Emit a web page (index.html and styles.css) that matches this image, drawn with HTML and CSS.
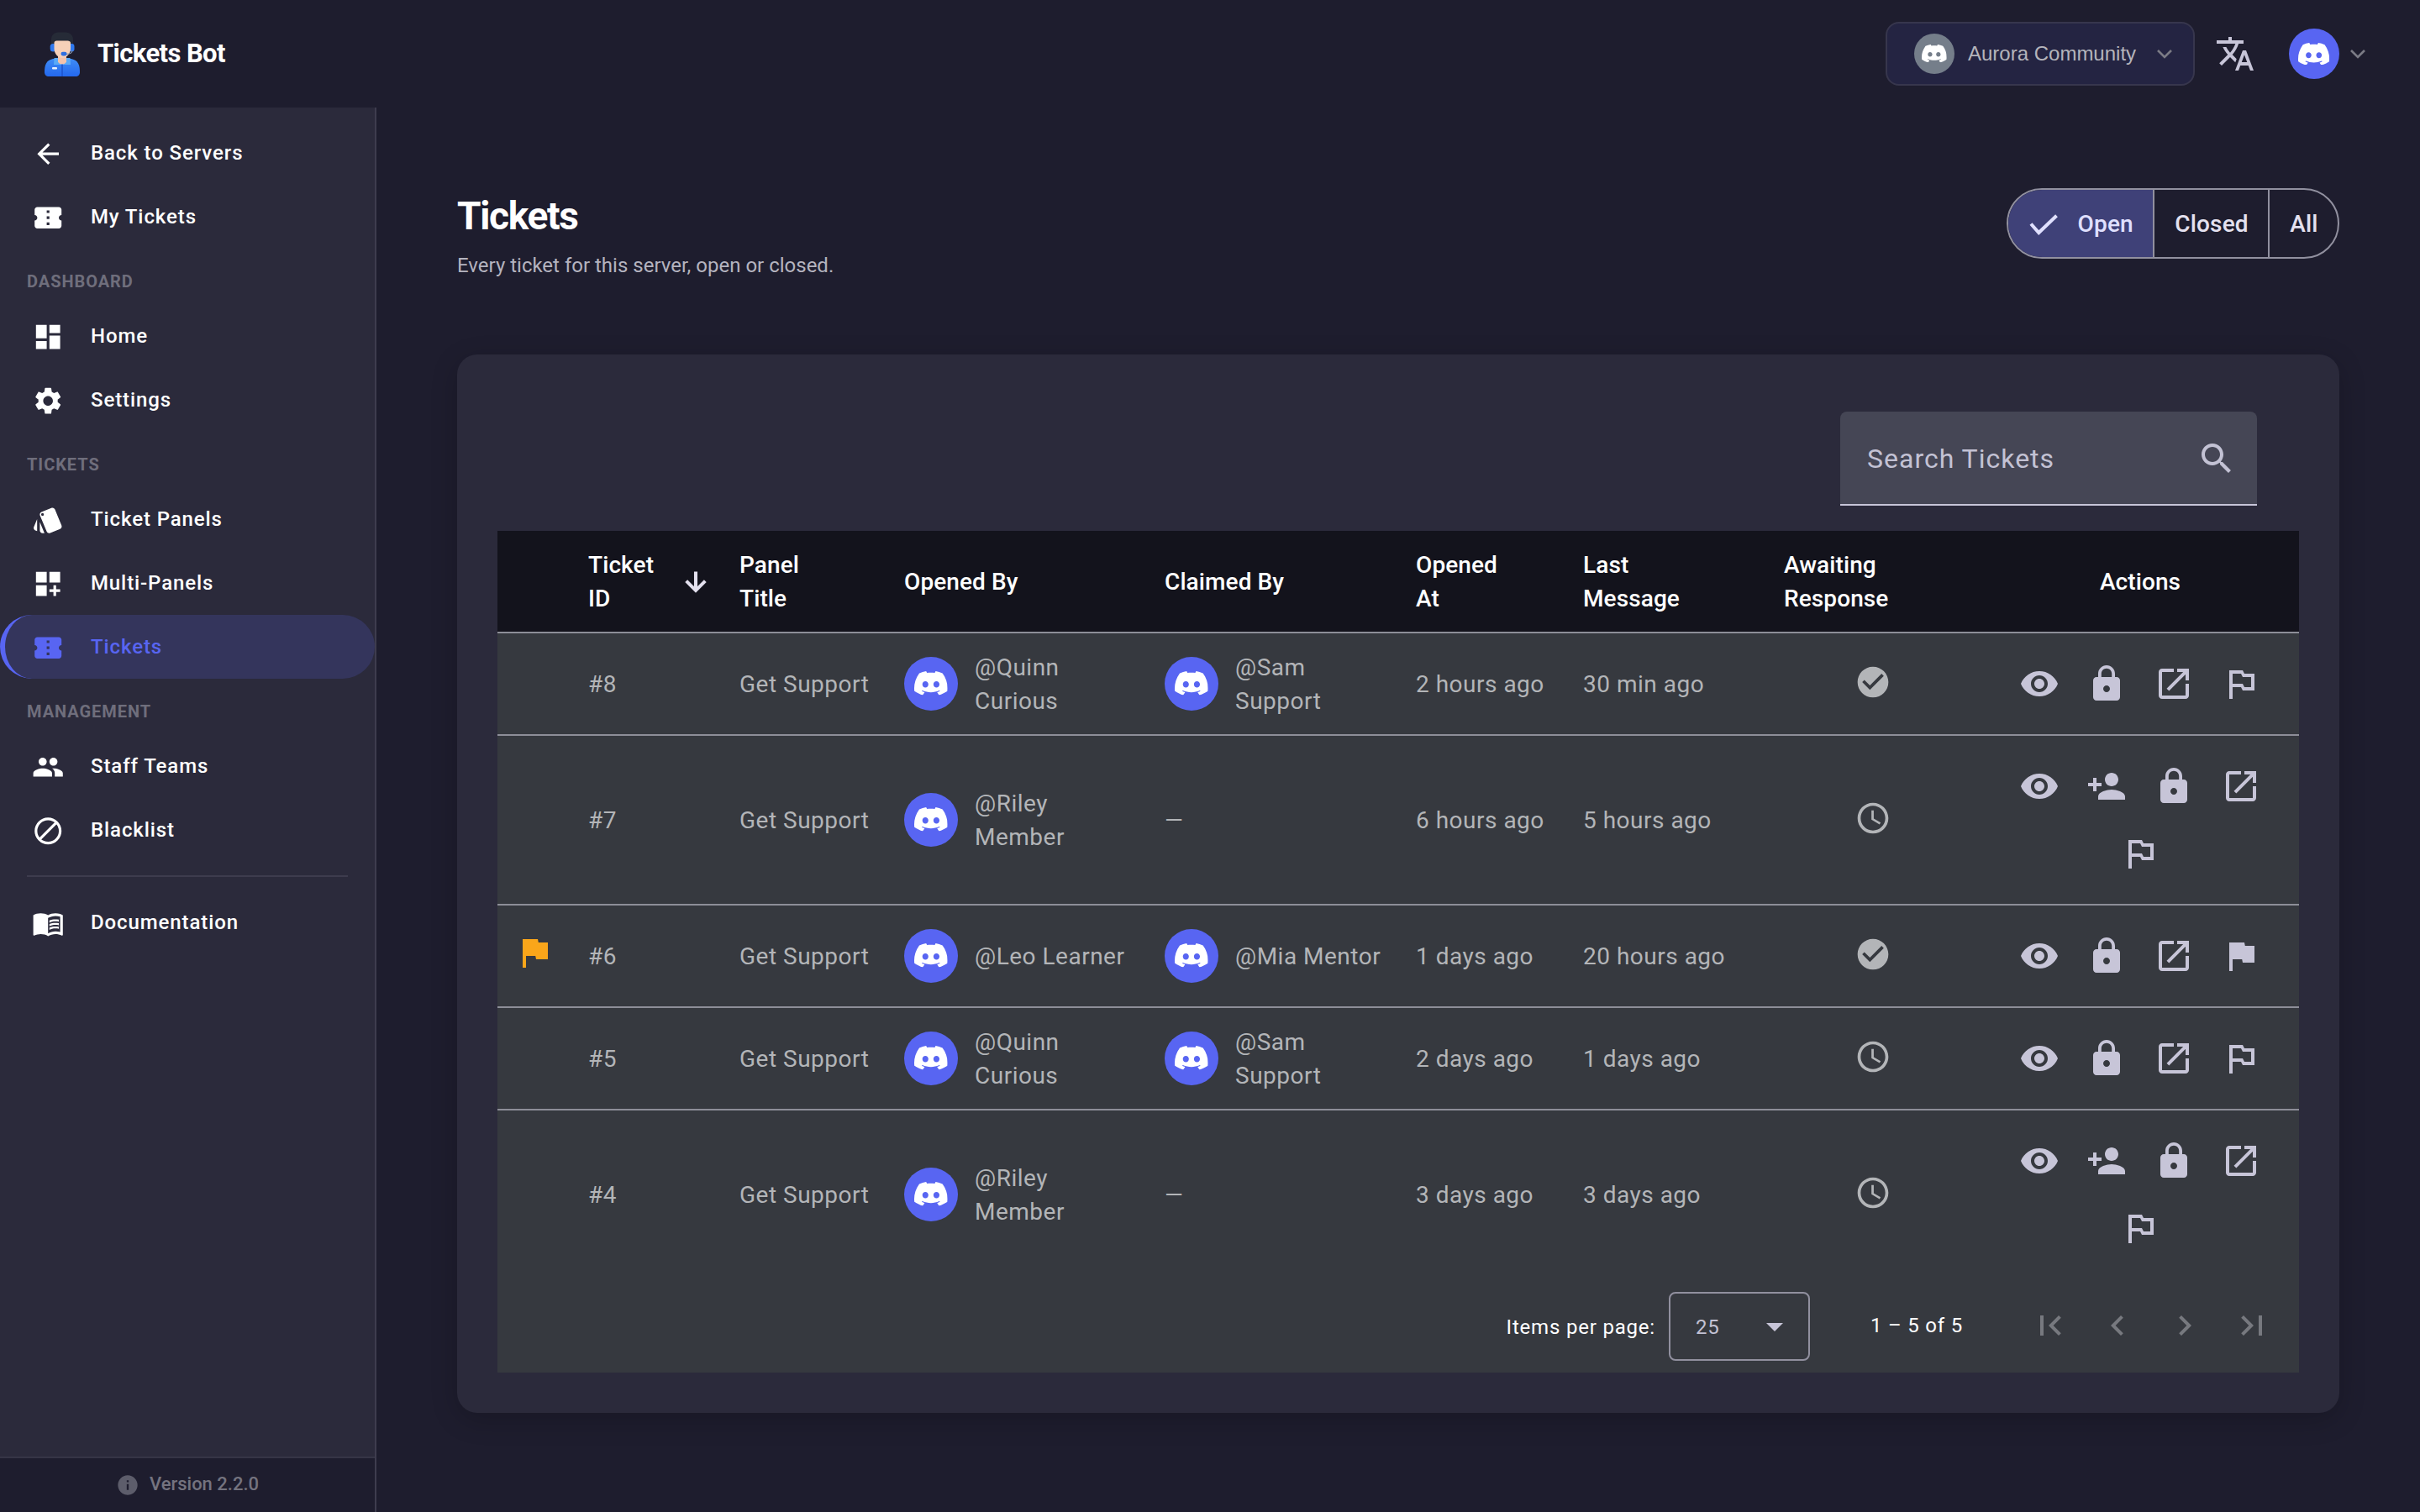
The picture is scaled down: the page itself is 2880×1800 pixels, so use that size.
FILE: index.html
```html
<!DOCTYPE html>
<html lang="en">
<head>
    <meta charset="UTF-8">
    <meta name="viewport" content="width=device-width, initial-scale=1.0">
    <title>Tickets Bot</title>
    <link rel="stylesheet" href="styles.css">
</head>
<body>

    <!-- icons -->
    <svg class="sprite">
        <symbol id="back" viewBox="0 0 24 24"><path d="M20 11H7.83l5.59-5.59L12 4l-8 8 8 8 1.41-1.41L7.83 13H20v-2z"/></symbol>
        <symbol id="ticket" viewBox="0 0 24 24"><path d="M22 10V6c0-1.11-.9-2-2-2H4c-1.1 0-1.99.89-1.99 2v4c1.1 0 1.99.9 1.99 2s-.89 2-2 2v4c0 1.1.9 2 2 2h16c1.1 0 2-.9 2-2v-4c-1.1 0-2-.9-2-2s.9-2 2-2zm-9 7.5h-2v-2h2v2zm0-4.5h-2v-2h2v2zm0-4.5h-2v-2h2v2z"/></symbol>
        <symbol id="home" viewBox="0 0 24 24"><path d="M3 13h8V3H3v10zm0 8h8v-6H3v6zm10 0h8V11h-8v10zm0-18v6h8V3h-8z"/></symbol>
        <symbol id="settings" viewBox="0 0 24 24"><path d="M19.14 12.94c.04-.3.06-.61.06-.94 0-.32-.02-.64-.07-.94l2.03-1.58c.18-.14.23-.41.12-.61l-1.92-3.32c-.12-.22-.37-.29-.59-.22l-2.39.96c-.5-.38-1.03-.7-1.62-.94l-.36-2.54c-.04-.24-.24-.41-.48-.41h-3.84c-.24 0-.43.17-.47.41l-.36 2.54c-.59.24-1.13.57-1.62.94l-2.39-.96c-.22-.08-.47 0-.59.22L2.74 8.87c-.12.21-.08.47.12.61l2.03 1.58c-.05.3-.09.63-.09.94s.02.64.07.94l-2.03 1.58c-.18.14-.23.41-.12.61l1.92 3.32c.12.22.37.29.59.22l2.39-.96c.5.38 1.03.7 1.62.94l.36 2.54c.05.24.24.41.48.41h3.84c.24 0 .44-.17.47-.41l.36-2.54c.59-.24 1.13-.56 1.62-.94l2.39.96c.22.08.47 0 .59-.22l1.92-3.32c.12-.22.07-.47-.12-.61l-2.01-1.58zM12 15.6c-1.98 0-3.6-1.62-3.6-3.6s1.62-3.6 3.6-3.6 3.6 1.62 3.6 3.6-1.62 3.6-3.6 3.6z"/></symbol>
        <symbol id="panels" viewBox="0 0 24 24"><path d="M2.53 19.65l1.34.56v-9.03l-2.43 5.86c-.41 1.02.08 2.19 1.09 2.61zm19.5-3.7L17.07 3.98c-.31-.75-1.04-1.21-1.81-1.23-.26 0-.53.04-.79.15L7.1 5.95c-.75.31-1.21 1.03-1.23 1.8-.01.27.04.54.15.8l4.96 11.97c.31.76 1.05 1.22 1.83 1.23.26 0 .52-.05.77-.15l7.36-3.05c1.02-.42 1.51-1.59 1.09-2.6zM7.88 8.75c-.55 0-1-.45-1-1s.45-1 1-1 1 .45 1 1-.45 1-1 1zm-2 11c0 1.1.9 2 2 2h1.45l-3.45-8.34v6.34z"/></symbol>
        <symbol id="multi" viewBox="0 0 24 24"><path d="M3 3h8v8H3zm10 0h8v8h-8zM3 13h8v8H3zm15 0h-2v3h-3v2h3v3h2v-3h3v-2h-3z"/></symbol>
        <symbol id="people" viewBox="0 0 24 24"><path d="M16 11c1.66 0 2.99-1.34 2.99-3S17.66 5 16 5c-1.66 0-3 1.34-3 3s1.34 3 3 3zm-8 0c1.66 0 2.99-1.34 2.99-3S9.66 5 8 5C6.34 5 5 6.34 5 8s1.34 3 3 3zm0 2c-2.33 0-7 1.17-7 3.5V19h14v-2.5c0-2.33-4.67-3.5-7-3.5zm8 0c-.29 0-.62.02-.97.05 1.16.84 1.97 1.97 1.97 3.45V19h6v-2.5c0-2.33-4.67-3.5-7-3.5z"/></symbol>
        <symbol id="block" viewBox="0 0 24 24"><path fill="none" stroke="currentColor" stroke-width="2" d="M12 3a9 9 0 1 0 0 18a9 9 0 1 0 0-18zM5.6 18.4L18.4 5.6"/></symbol>
        <symbol id="book" viewBox="0 0 24 24"><path d="M21 5c-1.11-.35-2.33-.5-3.5-.5-1.95 0-4.05.4-5.5 1.5-1.45-1.1-3.55-1.5-5.5-1.5S2.45 4.9 1 6v14.65c0 .25.25.5.5.5.1 0 .15-.05.25-.05C3.1 20.45 5.05 20 6.5 20c1.95 0 4.05.4 5.5 1.5 1.35-.85 3.8-1.5 5.5-1.5 1.65 0 3.35.3 4.75 1.05.1.05.15.05.25.05.25 0 .5-.25.5-.5V6c-.6-.45-1.25-.75-2-1zm0 13.5c-1.1-.35-2.3-.5-3.5-.5-1.7 0-4.15.65-5.5 1.5V8c1.35-.85 3.8-1.5 5.5-1.5 1.2 0 2.4.15 3.5.5v11.5z"/><path d="M17.5 10.5c.88 0 1.73.09 2.5.26V9.24c-.79-.15-1.64-.24-2.5-.24-1.7 0-3.24.29-4.5.83v1.66c1.13-.64 2.7-.99 4.5-.99zM13 12.49v1.66c1.13-.64 2.7-.99 4.5-.99.88 0 1.73.09 2.5.26V11.9c-.79-.15-1.64-.24-2.5-.24-1.7 0-3.24.3-4.5.83zm4.5 1.84c-1.7 0-3.24.29-4.5.83v1.66c1.13-.64 2.7-.99 4.5-.99.88 0 1.73.09 2.5.26v-1.52c-.79-.16-1.64-.24-2.5-.24z"/></symbol>
        <symbol id="info" viewBox="0 0 24 24"><path d="M12 2C6.48 2 2 6.48 2 12s4.48 10 10 10 10-4.48 10-10S17.52 2 12 2zm1 15h-2v-6h2v6zm0-8h-2V7h2v2z"/></symbol>
        <symbol id="translate" viewBox="0 0 24 24"><path d="M12.87 15.07l-2.54-2.51.03-.03c1.74-1.94 2.98-4.17 3.71-6.53H17V4h-7V2H8v2H1v1.99h11.17C11.5 7.92 10.44 9.75 9 11.35 8.07 10.32 7.3 9.19 6.69 8h-2c.73 1.63 1.73 3.17 2.98 4.56l-5.09 5.02L4 19l5-5 3.11 3.11.76-2.04zM18.5 10h-2L12 22h2l1.12-3h4.75L21 22h2l-4.5-12zm-2.62 7l1.62-4.33L19.12 17h-3.24z"/></symbol>
        <symbol id="chevron" viewBox="0 0 20 12"><path fill="none" stroke="currentColor" stroke-width="2.6" d="M2 2l8 8 8-8"/></symbol>
        <symbol id="check" viewBox="0 0 36 36"><path fill="none" stroke="currentColor" stroke-width="4" d="M3 18.5l9.3 10.5L33.5 8.7"/></symbol>
        <symbol id="search" viewBox="0 0 24 24"><path d="M15.5 14h-.79l-.28-.27C15.41 12.59 16 11.11 16 9.5 16 5.91 13.09 3 9.5 3S3 5.91 3 9.5 5.91 16 9.5 16c1.61 0 3.09-.59 4.23-1.57l.27.28v.79l5 4.99L20.49 19l-4.99-5zm-6 0C7.01 14 5 11.99 5 9.5S7.01 5 9.5 5 14 7.01 14 9.5 11.99 14 9.5 14z"/></symbol>
        <symbol id="down" viewBox="0 0 24 24"><path stroke="currentColor" stroke-width="0.7" d="M20 12l-1.41-1.41L13 16.17V4h-2v12.17l-5.58-5.59L4 12l8 8 8-8z"/></symbol>
        <symbol id="done" viewBox="0 0 24 24"><path d="M12 2C6.48 2 2 6.48 2 12s4.48 10 10 10 10-4.48 10-10S17.52 2 12 2zm-2 15l-5-5 1.41-1.41L10 14.17l7.59-7.59L19 8l-9 9z"/></symbol>
        <symbol id="clock" viewBox="0 0 24 24"><path d="M11.99 2C6.47 2 2 6.48 2 12s4.47 10 9.99 10C17.52 22 22 17.52 22 12S17.52 2 11.99 2zM12 20c-4.42 0-8-3.58-8-8s3.58-8 8-8 8 3.58 8 8-3.58 8-8 8zm.5-13H11v6l5.25 3.15.75-1.23-4.5-2.67z"/></symbol>
        <symbol id="eye" viewBox="0 0 24 24"><path d="M12 4.5C7 4.5 2.73 7.61 1 12c1.73 4.39 6 7.5 11 7.5s9.27-3.11 11-7.5c-1.73-4.39-6-7.5-11-7.5zM12 17c-2.76 0-5-2.24-5-5s2.24-5 5-5 5 2.24 5 5-2.24 5-5 5zm0-8c-1.66 0-3 1.34-3 3s1.34 3 3 3 3-1.34 3-3-1.34-3-3-3z"/></symbol>
        <symbol id="lock" viewBox="0 0 24 24"><path d="M18 8h-1V6c0-2.76-2.24-5-5-5S7 3.24 7 6v2H6c-1.1 0-2 .9-2 2v10c0 1.1.9 2 2 2h12c1.1 0 2-.9 2-2V10c0-1.1-.9-2-2-2zm-6 9c-1.1 0-2-.9-2-2s.9-2 2-2 2 .9 2 2-.9 2-2 2zm3.1-9H8.9V6c0-1.71 1.39-3.1 3.1-3.1 1.71 0 3.1 1.39 3.1 3.1v2z"/></symbol>
        <symbol id="open" viewBox="0 0 24 24"><path d="M19 19H5V5h7V3H5c-1.11 0-2 .9-2 2v14c0 1.1.89 2 2 2h14c1.1 0 2-.9 2-2v-7h-2v7zM14 3v2h3.59l-9.83 9.83 1.41 1.41L19 6.41V10h2V3h-7z"/></symbol>
        <symbol id="flag-outline" viewBox="0 0 24 24"><path d="M14 6l-1-2H5v17h2v-7h5l1 2h7V6h-6zm4 8h-4l-1-2H7V6h5l1 2h5v6z"/></symbol>
        <symbol id="flag" viewBox="0 0 24 24"><path d="M14.4 6L14 4H5v17h2v-7h5.6l.4 2h7V6z"/></symbol>
        <symbol id="add-person" viewBox="0 0 24 24"><path d="M15 12c2.21 0 4-1.79 4-4s-1.79-4-4-4-4 1.79-4 4 1.79 4 4 4zm-9-2V7H4v3H1v2h3v3h2v-3h3v-2H6zm9 4c-2.67 0-8 1.34-8 4v2h16v-2c0-2.66-5.33-4-8-4z"/></symbol>
        <symbol id="first" viewBox="0 0 24 24"><path d="M18.41 16.59L13.82 12l4.59-4.59L17 6l-6 6 6 6zM6 6h2v12H6z"/></symbol>
        <symbol id="prev" viewBox="0 0 24 24"><path d="M15.41 7.41L14 6l-6 6 6 6 1.41-1.41L10.83 12z"/></symbol>
        <symbol id="next" viewBox="0 0 24 24"><path d="M10 6L8.59 7.41 13.17 12l-4.58 4.59L10 18l6-6z"/></symbol>
        <symbol id="last" viewBox="0 0 24 24"><path d="M5.59 7.41L10.18 12l-4.59 4.59L7 18l6-6-6-6zM16 6h2v12h-2z"/></symbol>
        <symbol id="discord" viewBox="0 2.8 24 18.4" preserveAspectRatio="none"><path d="M20.317 4.3698a19.7913 19.7913 0 00-4.8851-1.5152.0741.0741 0 00-.0785.0371c-.211.3753-.4447.8648-.6083 1.2495-1.8447-.2762-3.68-.2762-5.4868 0-.1636-.3933-.4058-.8742-.6177-1.2495a.077.077 0 00-.0785-.037 19.7363 19.7363 0 00-4.8852 1.515.0699.0699 0 00-.0321.0277C.5334 9.0458-.319 13.5799.0992 18.0578a.0824.0824 0 00.0312.0561c2.0528 1.5076 4.0413 2.4228 5.9929 3.0294a.0777.0777 0 00.0842-.0276c.4616-.6304.8731-1.2952 1.226-1.9942a.076.076 0 00-.0416-.1057c-.6528-.2476-1.2743-.5495-1.8722-.8923a.077.077 0 01-.0076-.1277c.1258-.0943.2517-.1923.3718-.2914a.0743.0743 0 01.0776-.0105c3.9278 1.7933 8.18 1.7933 12.0614 0a.0739.0739 0 01.0785.0095c.1202.099.246.1981.3728.2924a.077.077 0 01-.0066.1276 12.2986 12.2986 0 01-1.873.8914.0766.0766 0 00-.0407.1067c.3604.698.7719 1.3628 1.225 1.9932a.076.076 0 00.0842.0286c1.961-.6067 3.9495-1.5219 6.0023-3.0294a.077.077 0 00.0313-.0552c.5004-5.177-.8382-9.6739-3.5485-13.6604a.061.061 0 00-.0312-.0286zM8.02 15.3312c-1.1825 0-2.1569-1.0857-2.1569-2.419 0-1.3332.9555-2.4189 2.157-2.4189 1.2108 0 2.1757 1.0952 2.1568 2.419 0 1.3332-.9555 2.4189-2.1569 2.4189zm7.9748 0c-1.1825 0-2.1569-1.0857-2.1569-2.419 0-1.3332.9554-2.4189 2.1569-2.4189 1.2108 0 2.1757 1.0952 2.1568 2.419 0 1.3332-.946 2.4189-2.1568 2.4189z"/></symbol>
    </svg>

    <header class="topbar">
        <div class="brand">
            <svg class="logo" viewBox="0 0 42 53">
                <defs>
                    <linearGradient id="shirt" x1="0" y1="0" x2="0" y2="1">
                        <stop offset="0" stop-color="#3f8cf5"/>
                        <stop offset="1" stop-color="#2468ee"/>
                    </linearGradient>
                </defs>
                <path fill="#262b37" d="M8 18V9c0-5 3.500-8.500 8-8.500h9c6 0 9 4 9 9V18z"/>
                <rect x="6.700" y="14" width="7" height="9.500" rx="3.500" fill="#2f78ee"/>
                <rect x="29" y="14" width="6.500" height="9.500" rx="3.200" fill="#2f78ee"/>
                <path fill="url(#shirt)" d="M0 48c0-9 2-14 10-16h22c8 2 10 7 10 16 0 3-2 5-5 5H5c-3 0-5-2-5-5z"/>
                <path fill="#5aaaf8" d="M11.500 31h19l.500 8H11z"/>
                <path fill="#f3c3ab" d="M16 28h10v7.500c-1.500 4-8.500 4-10 0z"/>
                <path fill="#f6d0b8" d="M11.500 13c0-1.500 1-2.500 3-2.500h13c2 0 3.500 1 3.500 2.500v7c0 6-5 11-10 11s-9.500-5-9.500-11z"/>
                <path fill="none" stroke="#8793a6" stroke-width="1.200" d="M33 22c0 3-2.500 4.500-7 4.300"/>
                <rect x="19.500" y="23.800" width="7" height="4.600" rx="2.300" fill="#2f6fe0"/>
                <path stroke="#1e55cf" stroke-width="1.600" d="M21 38.500V53"/>
                <rect x="9" y="42" width="6" height="2.500" rx="1" fill="#e8f1ff"/>
            </svg>
            <span>Tickets Bot</span>
        </div>
        <div class="topbar-right">
            <div class="server">
                <span class="avatar grey"><svg><use href="#discord"/></svg></span>
                <span class="server-name">Aurora Community</span>
                <svg class="chevron"><use href="#chevron"/></svg>
            </div>
            <svg class="translate"><use href="#translate"/></svg>
            <span class="avatar user"><svg><use href="#discord"/></svg></span>
            <svg class="chevron"><use href="#chevron"/></svg>
        </div>
    </header>

    <div class="layout">
        <aside class="sidebar">
            <nav>
                <a class="nav-item"><svg><use href="#back"/></svg>Back to Servers</a>
                <a class="nav-item"><svg><use href="#ticket"/></svg>My Tickets</a>
                <h4>DASHBOARD</h4>
                <a class="nav-item"><svg><use href="#home"/></svg>Home</a>
                <a class="nav-item"><svg><use href="#settings"/></svg>Settings</a>
                <h4>TICKETS</h4>
                <a class="nav-item"><svg><use href="#panels"/></svg>Ticket Panels</a>
                <a class="nav-item"><svg><use href="#multi"/></svg>Multi-Panels</a>
                <a class="nav-item active"><svg><use href="#ticket"/></svg>Tickets</a>
                <h4>MANAGEMENT</h4>
                <a class="nav-item"><svg><use href="#people"/></svg>Staff Teams</a>
                <a class="nav-item"><svg><use href="#block"/></svg>Blacklist</a>
                <hr>
                <a class="nav-item"><svg><use href="#book"/></svg>Documentation</a>
            </nav>
            <div class="version"><svg><use href="#info"/></svg>Version 2.2.0</div>
        </aside>

        <main>
            <div class="page-header">
                <div class="page-title">
                    <h1>Tickets</h1>
                    <p>Every ticket for this server, open or closed.</p>
                </div>
                <div class="toggle">
                    <button class="selected"><svg><use href="#check"/></svg>Open</button>
                    <button>Closed</button>
                    <button>All</button>
                </div>
            </div>

            <section class="card">
                <div class="search">
                    <span>Search Tickets</span>
                    <svg><use href="#search"/></svg>
                </div>

                <table>
                    <colgroup>
                        <col class="c-flag"><col class="c-id"><col class="c-panel"><col class="c-opened"><col class="c-claimed">
                        <col class="c-at"><col class="c-last"><col class="c-wait"><col>
                    </colgroup>
                    <thead>
                        <tr>
                            <th></th>
                            <th><div class="sorted"><span>Ticket<br>ID</span><svg><use href="#down"/></svg></div></th>
                            <th>Panel<br>Title</th>
                            <th>Opened By</th>
                            <th>Claimed By</th>
                            <th>Opened<br>At</th>
                            <th>Last<br>Message</th>
                            <th>Awaiting<br>Response</th>
                            <th class="actions-head">Actions</th>
                        </tr>
                    </thead>
                    <tbody>
                        <tr>
                            <td></td>
                            <td>#8</td>
                            <td>Get Support</td>
                            <td><div class="person"><span class="avatar"><svg><use href="#discord"/></svg></span><span>@Quinn Curious</span></div></td>
                            <td><div class="person"><span class="avatar"><svg><use href="#discord"/></svg></span><span>@Sam Support</span></div></td>
                            <td>2 hours ago</td>
                            <td>30 min ago</td>
                            <td class="awaiting"><svg><use href="#done"/></svg></td>
                            <td class="actions">
                                <div>
                                    <svg><use href="#eye"/></svg>
                                    <svg><use href="#lock"/></svg>
                                    <svg><use href="#open"/></svg>
                                    <svg><use href="#flag-outline"/></svg>
                                </div>
                            </td>
                        </tr>
                        <tr class="tall">
                            <td></td>
                            <td>#7</td>
                            <td>Get Support</td>
                            <td><div class="person"><span class="avatar"><svg><use href="#discord"/></svg></span><span>@Riley Member</span></div></td>
                            <td>—</td>
                            <td>6 hours ago</td>
                            <td>5 hours ago</td>
                            <td class="awaiting"><svg><use href="#clock"/></svg></td>
                            <td class="actions">
                                <div>
                                    <svg><use href="#eye"/></svg>
                                    <svg><use href="#add-person"/></svg>
                                    <svg><use href="#lock"/></svg>
                                    <svg><use href="#open"/></svg>
                                    <svg><use href="#flag-outline"/></svg>
                                </div>
                            </td>
                        </tr>
                        <tr>
                            <td class="flagged"><svg><use href="#flag"/></svg></td>
                            <td>#6</td>
                            <td>Get Support</td>
                            <td><div class="person"><span class="avatar"><svg><use href="#discord"/></svg></span><span>@Leo Learner</span></div></td>
                            <td><div class="person"><span class="avatar"><svg><use href="#discord"/></svg></span><span>@Mia Mentor</span></div></td>
                            <td>1 days ago</td>
                            <td>20 hours ago</td>
                            <td class="awaiting"><svg><use href="#done"/></svg></td>
                            <td class="actions">
                                <div>
                                    <svg><use href="#eye"/></svg>
                                    <svg><use href="#lock"/></svg>
                                    <svg><use href="#open"/></svg>
                                    <svg><use href="#flag"/></svg>
                                </div>
                            </td>
                        </tr>
                        <tr>
                            <td></td>
                            <td>#5</td>
                            <td>Get Support</td>
                            <td><div class="person"><span class="avatar"><svg><use href="#discord"/></svg></span><span>@Quinn Curious</span></div></td>
                            <td><div class="person"><span class="avatar"><svg><use href="#discord"/></svg></span><span>@Sam Support</span></div></td>
                            <td>2 days ago</td>
                            <td>1 days ago</td>
                            <td class="awaiting"><svg><use href="#clock"/></svg></td>
                            <td class="actions">
                                <div>
                                    <svg><use href="#eye"/></svg>
                                    <svg><use href="#lock"/></svg>
                                    <svg><use href="#open"/></svg>
                                    <svg><use href="#flag-outline"/></svg>
                                </div>
                            </td>
                        </tr>
                        <tr class="tall">
                            <td></td>
                            <td>#4</td>
                            <td>Get Support</td>
                            <td><div class="person"><span class="avatar"><svg><use href="#discord"/></svg></span><span>@Riley Member</span></div></td>
                            <td>—</td>
                            <td>3 days ago</td>
                            <td>3 days ago</td>
                            <td class="awaiting"><svg><use href="#clock"/></svg></td>
                            <td class="actions">
                                <div>
                                    <svg><use href="#eye"/></svg>
                                    <svg><use href="#add-person"/></svg>
                                    <svg><use href="#lock"/></svg>
                                    <svg><use href="#open"/></svg>
                                    <svg><use href="#flag-outline"/></svg>
                                </div>
                            </td>
                        </tr>
                    </tbody>
                </table>

                <div class="paginator">
                    <span class="per-page">Items per page:</span>
                    <div class="select">25<i></i></div>
                    <span class="range">1 – 5 of 5</span>
                    <svg><use href="#first"/></svg>
                    <svg><use href="#prev"/></svg>
                    <svg><use href="#next"/></svg>
                    <svg><use href="#last"/></svg>
                </div>
            </section>
        </main>
    </div>

</body>
</html>
```
FILE: styles.css
```css
* {
    box-sizing: border-box;
}
body {
    margin: 0;
    height: 1800px;
    display: flex;
    flex-direction: column;
    background: #1e1d2e;
    color: #fff;
    font-family: Roboto, sans-serif;
    font-size: 28px;
    overflow: hidden;
}
svg {
    display: block;
    flex: none;
    fill: currentColor;
}
.sprite {
    display: none;
}

/* top bar */
.topbar {
    height: 128px;
    flex: none;
    display: flex;
    align-items: center;
    justify-content: space-between;
    padding: 0 64px 0 53px;
}
.brand {
    display: flex;
    align-items: center;
    gap: 21px;
    font-size: 31px;
    font-weight: 700;
    letter-spacing: -0.6px;
}
.brand span {
    margin-top: -2px;
}
.logo {
    width: 42px;
    height: 53px;
}
.topbar-right {
    display: flex;
    align-items: center;
}
.server {
    width: 368px;
    height: 76px;
    display: flex;
    align-items: center;
    padding-left: 32px;
    border: 2px solid #37364d;
    border-radius: 16px;
    background: #242442;
}
.server-name {
    font-family: "Liberation Sans", Arial, sans-serif;
    font-size: 24px;
    color: #b4b4bb;
    margin: 0 24px 0 16px;
}
.chevron {
    width: 20px;
    height: 12px;
    color: #7b7b85;
}
.translate {
    width: 48px;
    height: 48px;
    margin: 0 40px 0 24px;
    color: #c7c5d8;
}
.avatar {
    width: 64px;
    height: 64px;
    flex: none;
    display: flex;
    align-items: center;
    justify-content: center;
    border-radius: 50%;
    background: #5865f2;
    color: #fff;
}
.avatar svg {
    width: 62%;
    height: 44.5%;
}
.avatar.grey {
    width: 48px;
    height: 48px;
    background: #757e8a;
}
.avatar.user {
    width: 60px;
    height: 60px;
    margin-right: 12px;
}

/* sidebar */
.layout {
    flex: 1;
    display: flex;
    min-height: 0;
}
.sidebar {
    width: 448px;
    flex: none;
    display: flex;
    flex-direction: column;
    background: #2b2a3b;
    border-right: 2px solid #3e3c4e;
}
nav {
    flex: 1;
    padding-top: 16px;
}
.nav-item {
    height: 76px;
    display: flex;
    align-items: center;
    gap: 31.6px;
    padding-left: 32px;
    border-left: 6px solid transparent;
    border-radius: 38px;
    font-size: 24px;
    font-weight: 500;
    letter-spacing: 0.9px;
}
.nav-item svg {
    width: 38.4px;
    height: 38.4px;
    margin-top: 2px;
}
.nav-item.active {
    color: #5865f2;
    background: #34355c;
    border-left-color: #5865f2;
}
nav h4 {
    height: 66px;
    margin: 0;
    padding-left: 32px;
    line-height: 78px;
    font-size: 20px;
    font-weight: 700;
    letter-spacing: 0.95px;
    color: #6f6e7c;
}
nav hr {
    height: 2px;
    margin: 16px 32px;
    border: 0;
    background: #3e3c4e;
}
.version {
    height: 66px;
    display: flex;
    align-items: center;
    justify-content: center;
    gap: 12px;
    padding-bottom: 3px;
    border-top: 2px solid #363546;
    background: #1e1d2e;
    color: #74737f;
    font-size: 22px;
    font-weight: 500;
}
.version svg {
    width: 28px;
    height: 28px;
    color: #5d5d6b;
    margin-top: 3px;
}

/* page */
main {
    flex: 1;
    padding: 96px 96px 0;
}
.page-header {
    display: flex;
    justify-content: space-between;
    align-items: flex-start;
    margin-bottom: 89px;
}
.page-title {
    padding-top: 7px;
}
h1 {
    margin: 0 0 17px;
    line-height: 52px;
    font-size: 46px;
    font-weight: 700;
    letter-spacing: -1.3px;
}
.page-title p {
    margin: 0;
    line-height: 33px;
    font-size: 24px;
    color: #b4b3bf;
}
.toggle {
    height: 84px;
    display: flex;
    border: 2px solid #91909f;
    border-radius: 42px;
    overflow: hidden;
}
.toggle button {
    display: flex;
    align-items: center;
    padding: 0 23.5px 0 24px;
    border: 0;
    background: none;
    color: #e4e1ef;
    font: 500 28px Roboto, sans-serif;
    letter-spacing: 0.15px;
}
.toggle button + button {
    border-left: 2px solid #91909f;
}
.toggle .selected {
    background: #3f4178;
    color: #e0e0ff;
}
.toggle svg {
    width: 36px;
    height: 36px;
    margin-right: 23px;
}

.card {
    height: 1260px;
    padding: 68px 48px 48px;
    border-radius: 24px;
    background: #2b2a3b;
    box-shadow: 0 8px 32px rgba(0, 0, 0, 0.2);
}
.search {
    width: 496px;
    height: 112px;
    margin: 0 50px 30px auto;
    display: flex;
    align-items: center;
    justify-content: space-between;
    padding: 2px 24px 0 32px;
    border-bottom: 2px solid #c7c5d8;
    border-radius: 8px 8px 0 0;
    background: #454655;
    color: #c3c2d4;
    font-size: 32px;
    letter-spacing: 1px;
}
.search svg {
    width: 48px;
    height: 48px;
}

/* table */
table {
    width: 2144px;
    table-layout: fixed;
    border-collapse: separate;
    border-spacing: 0;
    background: #36393f;
    line-height: 40px;
}
.c-flag { width: 88px; }
.c-id { width: 180px; }
.c-panel { width: 196px; }
.c-opened { width: 310px; }
.c-claimed { width: 299px; }
.c-at { width: 199px; }
.c-last { width: 239px; }
.c-wait { width: 252px; }
th, td {
    height: 122px;
    padding: 1px 10px 0 20px;
    text-align: left;
    vertical-align: middle;
    border-bottom: 2px solid #8d8e98;
}
th {
    background: #13131c;
    font-weight: 500;
    letter-spacing: 0.1px;
}
td {
    color: #b3b5b8;
    letter-spacing: 0.5px;
}
.tall td {
    height: 202px;
}
tr:last-child.tall td {
    height: 200px;
    border-bottom: 0;
}
.sorted {
    display: flex;
    align-items: center;
}
.sorted span {
    width: 110px;
}
.sorted svg {
    width: 36px;
    height: 36px;
    color: #e4e1ef;
}
.person {
    display: flex;
    align-items: center;
    gap: 20px;
}
.person .avatar {
    margin-bottom: 2px;
}
.flagged svg {
    width: 48px;
    height: 48px;
    margin-bottom: 9px;
    color: #faa61a;
}
td.awaiting {
    padding: 0;
}
.awaiting svg {
    width: 44px;
    height: 44px;
    margin: 0 auto 4px;
}
th.actions-head {
    padding: 1px 0 0 3px;
    text-align: center;
}
td.actions {
    padding: 0 0 0 3px;
    color: #c7c5d8;
}
.actions div {
    width: 320px;
    margin: 0 auto;
    display: flex;
    flex-wrap: wrap;
    justify-content: center;
}
.actions svg {
    width: 80px;
    height: 80px;
    padding: 16px;
}

/* paginator */
.paginator {
    height: 112px;
    display: flex;
    align-items: center;
    justify-content: flex-end;
    padding-right: 16px;
    background: #36393f;
    font-size: 24px;
    letter-spacing: 0.8px;
}
.per-page {
    margin: 4px 16px 0 0;
}
.select {
    width: 168px;
    height: 82px;
    margin: 2px 72px 0 0;
    display: flex;
    align-items: center;
    justify-content: space-between;
    padding: 2px 30px 0;
    border: 2px solid #91909f;
    border-radius: 8px;
    color: #c3c2d4;
}
.select i {
    border: 10px solid transparent;
    border-top-color: #c7c5d8;
    border-bottom: 0;
}
.range {
    margin-right: 64px;
}
.paginator svg {
    width: 80px;
    height: 80px;
    padding: 16px;
    color: #77797f;
}
```
